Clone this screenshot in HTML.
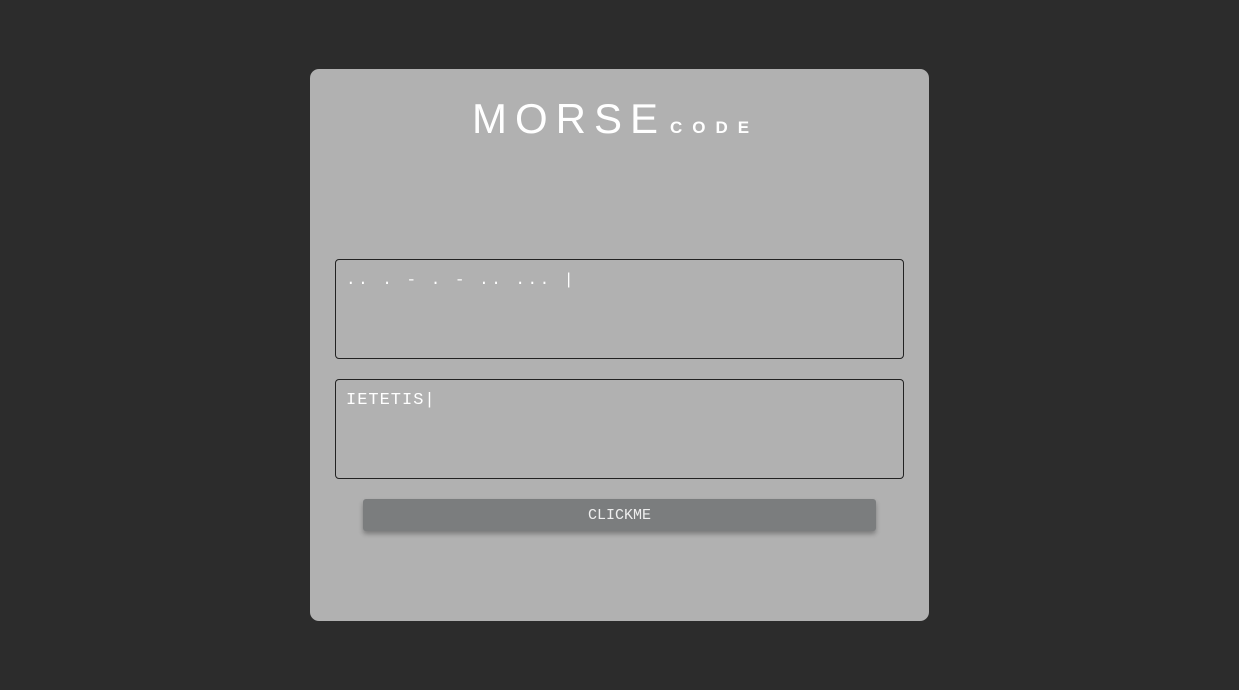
<!DOCTYPE html>
<html><head><style>
body{margin:0;background:#2c2c2c;width:1239px;height:690px;overflow:hidden;font-family:"Liberation Mono",monospace;}
.card{position:absolute;left:310px;top:69px;width:619px;height:552px;background:#b1b1b1;border-radius:9px;}
.logo{position:absolute;left:162px;top:26px;color:#fff;white-space:nowrap;}
.m{font-family:"Liberation Sans",sans-serif;font-weight:normal;font-size:42px;letter-spacing:8px;}
.c{font-family:"Liberation Sans",sans-serif;font-weight:900;font-size:17px;letter-spacing:10px;margin-left:4px;}
.box{position:absolute;left:25px;width:569px;height:100px;border:1px solid #222;border-radius:4px;color:#fff;font-size:17px;padding:11px 10px;box-sizing:border-box;}
.btn{position:absolute;left:53px;top:430px;width:513px;height:32px;background:#7b7d7e;border-radius:3px;color:#eee;font-size:15px;text-align:center;line-height:33px;box-shadow:0 3px 5px rgba(0,0,0,.3);font-family:"Liberation Mono",monospace;}
</style></head><body>
<div class="card">
<div class="logo"><span class="m">MORSE</span><span class="c">CODE</span></div>
<div class="box" style="top:190px;letter-spacing:2.5px;font-size:16px">.. . - . - .. ... |</div>
<div class="box" style="top:310px;letter-spacing:1px">IETETIS|</div>
<div class="btn">CLICKME</div>
</div>
</body></html>
